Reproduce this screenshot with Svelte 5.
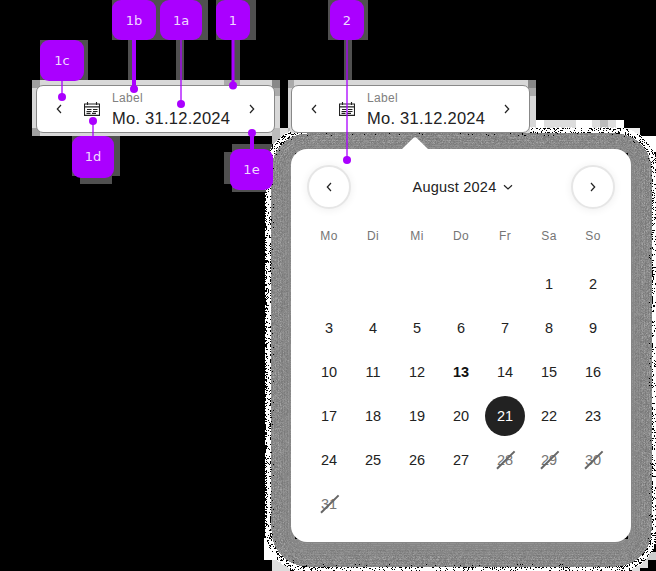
<script>
  const weekdays = ['Mo', 'Di', 'Mi', 'Do', 'Fr', 'Sa', 'So'];
  const days = [...Array(5).fill(null), ...Array.from({ length: 31 }, (_, i) => i + 1)];
  const disabled = [28, 29, 30, 31];

  // Callouts: label, box, connector x, connector start/end, connector width, dot y
  const pins = [
    { t: '1b', x: 112, y: 0, w: 44, h: 40, lx: 134, y1: 40, y2: 89, lw: 4, dot: 89 },
    { t: '1a', x: 160, y: 0, w: 42, h: 40, lx: 181, y1: 40, y2: 104, lw: 2, dot: 104 },
    { t: '1', x: 216, y: 0, w: 34, h: 40, lx: 233, y1: 40, y2: 85, lw: 3, dot: 85.5 },
    { t: '1c', x: 40, y: 40, w: 44, h: 41, lx: 62, y1: 80, y2: 97, lw: 2, dot: 97 },
    { t: '1d', x: 72, y: 136, w: 42, h: 41.5, lx: 93, y1: 121, y2: 137, lw: 2, dot: 121 },
    { t: '1e', x: 230, y: 149, w: 43, h: 41, lx: 252, y1: 133, y2: 150, lw: 4, dot: 133 },
    { t: '2', x: 330, y: 0, w: 34, h: 40, lx: 347, y1: 40, y2: 160, lw: 2, dot: 160 }
  ];

  // Grey blocks around the callouts and fields: x, y, w, h, fill
  const blocks = [
    [32, 80, 248, 56, '#d8d8d8'], [32, 80, 8, 8, '#a0a0a0'], [32, 128, 8, 8, '#a0a0a0'],
    [224, 80, 16, 8, '#aaa'], [272, 80, 8, 8, '#888'], [272, 88, 8, 8, '#aaa'], [272, 128, 8, 8, '#bbb'],
    [288, 80, 248, 56, '#d8d8d8'], [288, 80, 6, 8, '#aaa'], [528, 80, 8, 8, '#888'], [528, 88, 8, 8, '#aaa'],
    [112, 0, 48, 40, '#505050'], [160, 0, 48, 40, '#505050'], [216, 0, 40, 40, '#505050'],
    [328, 0, 40, 40, '#505050'], [40, 40, 48, 40, '#505050'],
    [72, 136, 48, 40, '#505050'], [80, 176, 32, 8, '#505050'],
    [224, 152, 48, 32, '#505050'], [232, 144, 40, 48, '#505050'],
    [128, 40, 8, 40, '#505050'], [176, 40, 8, 40, '#505050'],
    [232, 40, 8, 40, '#505050'], [344, 40, 8, 40, '#505050'],
    [272, 128, 18, 16, '#bbb'], [280, 128, 8, 8, '#ddd'],
    [536, 120, 88, 12, '#ddd'], [536, 120, 8, 8, '#fff'], [576, 120, 16, 8, '#fff'],
    [600, 120, 8, 8, '#bbb'], [616, 120, 8, 8, '#fff'],
    [616, 128, 24, 12, '#eee'], [640, 136, 16, 16, '#fff'],
    [264, 552, 14, 8, '#fff'], [272, 560, 18, 11, '#ddd'], [264, 538, 8, 14, '#fff'],
    [640, 552, 16, 8, '#ccc'], [640, 560, 8, 8, '#ddd'], [632, 563, 8, 8, '#ddd']
  ];

  // Grainy halo around the calendar: one path per tone
  const tones = ['#000', '#fff', '#707070', '#7b7b7b', '#868686', '#929292', '#a2a2a2'];
  function buildHalo() {
    let seed = 20241;
    const rnd = () => {
      seed = (Math.imul(seed, 1664525) + 1013904223) >>> 0;
      return seed / 4294967296;
    };
    const paths = tones.map(() => '');
    for (let y = 124; y < 571; y++) {
      for (let x = 262; x < 656; x++) {
        if (x > 294 && x < 628 && y > 152 && y < 539) continue;
        if (y < 133 && x < 530 && x > 290) continue;
        const dx = Math.max(307 - x, 0, x - 615);
        const dy = Math.max(169 - y, 0, y - 530);
        const d = Math.hypot(dx, dy) - 16;
        const r = rnd();
        let k;
        if (d > 25.5 + r) continue;
        if (d > 20) k = r < (d > 24 || d < 22 ? 0.36 : 0.12) ? 0 : 1;
        else {
          const band = [0, 0.3, -0.3, 0.5, -0.4][Math.abs(Math.floor(d)) % 5];
          const spread = d < 3 ? 0.6 : d < 10 ? 1.7 : 2.8;
          k = Math.min(6, Math.max(2, Math.round(4.2 + band + (r - 0.5) * spread)));
          if (d > 17 && rnd() < 0.03) k = 0;
        }
        paths[k] += `M${x} ${y}h1v1h-1z`;
      }
    }
    return paths;
  }
  const halo = buildHalo();
</script>

{#snippet chevron(dir, size)}
  <svg class="chev" width={size} height={size} viewBox="0 0 12 12">
    <path d={dir === 'left' ? 'M8 2 4.3 6 8 10' : dir === 'right' ? 'M4 2 7.7 6 4 10' : 'M2 4.2 6 8l4-3.8'} />
  </svg>
{/snippet}

{#snippet field()}
  <div class="field">
    <span class="step">{@render chevron('left', 12)}</span>
    <svg class="cal" width="16" height="14" viewBox="0 0 16 14">
      <path d="M.5 2h15v11.4H.5zM.5 4.9h15M3.5 0v3M12.5 0v3M3 7.5h4.5M9 7.5h4.5M2.5 9.5h5M9 9.5h4.5M2.5 11.4h4M8 11.4h4" />
    </svg>
    <div class="text">
      <span class="label">Label</span>
      <span class="value">Mo. 31.12.2024</span>
    </div>
    <span class="step">{@render chevron('right', 12)}</span>
  </div>
{/snippet}

<div class="stage">
  <svg class="backdrop" width="656" height="571" shape-rendering="crispEdges">
    {#each blocks as [x, y, w, h, fill]}
      <rect {x} {y} width={w} height={h} {fill} />
    {/each}
    {#each halo as d, i}
      <path {d} fill={tones[i]} />
    {/each}
  </svg>

  <div class="row">
    {@render field()}
    <div class="picker">
      {@render field()}
      <div class="panel">
        <svg class="arrow" width="26" height="14" viewBox="0 0 26 14"><path d="M0 14 11 3.3q2-2 4 0L26 14z" /></svg>
        <header>
          <button aria-label="Vorheriger Monat">{@render chevron('left', 12)}</button>
          <div class="month">August 2024 {@render chevron('down', 12)}</div>
          <button aria-label="Nächster Monat">{@render chevron('right', 12)}</button>
        </header>
        <div class="weekdays">
          {#each weekdays as w}<span>{w}</span>{/each}
        </div>
        <div class="days">
          {#each days as d}
            <span class="day" class:today={d === 13} class:selected={d === 21} class:off={disabled.includes(d)}>
              <i>{d ?? ''}</i>
              {#if disabled.includes(d)}
                <svg class="strike" width="20" height="20" viewBox="0 0 20 20"><path d="M1 18.8 18.6 1.4" /></svg>
              {/if}
            </span>
          {/each}
        </div>
      </div>
    </div>
  </div>

  <svg class="lines" width="656" height="571">
    {#each pins as p}
      <path d={`M${p.lx} ${p.y1}V${p.y2}`} stroke-width={p.lw} opacity={p.lw === 2 ? 0.65 : 1} />
      <circle cx={p.lx} cy={p.dot} r="4" />
    {/each}
  </svg>
  {#each pins as p}
    <span class="tag" style="left:{p.x}px;top:{p.y}px;width:{p.w}px;height:{p.h}px">{p.t}</span>
  {/each}
</div>

<style>
  :global(body) { margin: 0; background: #000; overflow: hidden; }
  .stage {
    position: relative;
    width: 656px;
    height: 571px;
    box-sizing: border-box;
    padding: 85px 0 0 36px;
    overflow: hidden;
    background: #000;
    color: #222;
    font-family: 'Liberation Sans', Arial, sans-serif;
  }
  .backdrop, .lines { position: absolute; left: 0; top: 0; }
  .lines path { stroke: #a0f; fill: none; }
  .lines circle { fill: #a0f; }
  .row { position: relative; display: flex; gap: 16px; align-items: flex-start; }
  .field {
    display: flex;
    align-items: center;
    box-sizing: border-box;
    width: 239px;
    height: 48px;
    padding: 0 16px;
    border: 1px solid #888;
    border-radius: 7px;
    background: #fff;
  }
  .step { display: flex; width: 12px; }
  .cal { margin: 0 12px 0 19px; fill: none; stroke: #222; stroke-width: 1.1; }
  .text { display: flex; flex-direction: column; flex: 1; padding-top: 2px; white-space: nowrap; }
  .label { font-size: 12px; line-height: 16px; letter-spacing: 0.35px; color: #808080; }
  .value { font-size: 16.5px; line-height: 24px; letter-spacing: 0.25px; }
  .chev { display: block; fill: none; stroke: #222; stroke-width: 1.2; }
  .panel {
    position: relative;
    box-sizing: border-box;
    width: 340px;
    height: 393px;
    margin-top: 16px;
    padding: 16px;
    border-radius: 16px;
    background: #fff;
  }
  .arrow { position: absolute; left: 111px; top: -14px; fill: #fff; }
  header { display: flex; align-items: center; justify-content: space-between; height: 44px; }
  button {
    display: grid;
    place-items: center;
    width: 44px;
    height: 44px;
    padding: 0;
    border: 2px solid #e6e6e6;
    border-radius: 50%;
    background: #fff;
    box-shadow: 0 1px 8px rgba(0, 0, 0, 0.07);
  }
  .month { display: flex; align-items: center; gap: 6px; font-size: 14.5px; letter-spacing: 0.22px; margin-left: 5px; }
  .weekdays, .days { display: grid; grid-template-columns: repeat(7, 44px); }
  .weekdays { height: 53px; align-items: center; text-align: center; font-size: 12px; letter-spacing: 0.3px; color: #757575; }
  .days { grid-auto-rows: 44px; place-items: center; font-size: 14.5px; }
  .day { position: relative; display: grid; place-items: center; width: 40px; height: 40px; border-radius: 50%; }
  .day i { font-style: normal; }
  .today { font-weight: 700; color: #111; }
  .selected { background: #222; color: #fff; }
  .off { color: #767676; }
  .strike { position: absolute; left: 11px; top: 10px; stroke: #666; stroke-width: 2; }
  .tag {
    position: absolute;
    display: grid;
    place-items: center;
    border-radius: 9px;
    background: #a0f;
    color: #f0d8ff;
    font: 13px 'DejaVu Sans', sans-serif;
  }
</style>
